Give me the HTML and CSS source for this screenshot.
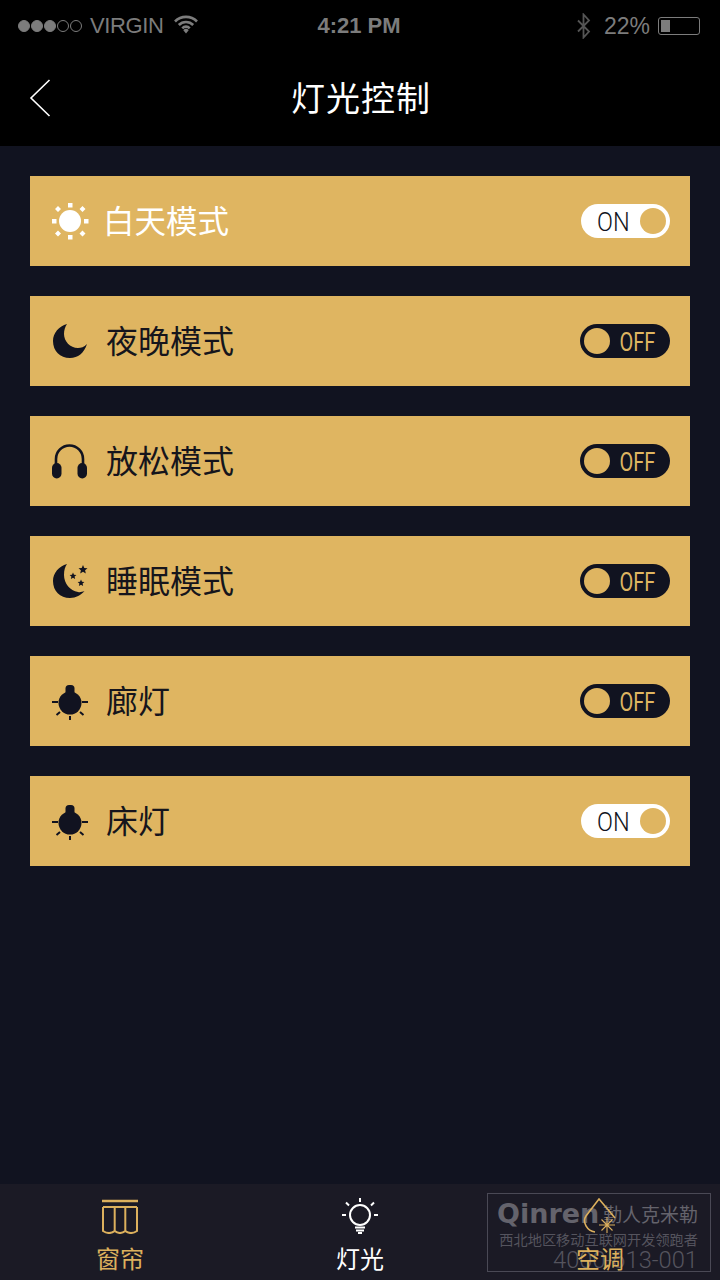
FILE: index.html
```html
<!DOCTYPE html>
<html lang="zh-CN">
<head>
  <meta charset="UTF-8">
  <title>灯光控制</title>
  <meta name="viewport" content="width=device-width, initial-scale=1.0">
  <link rel="stylesheet" href="styles.css">
</head>
<body>
  <header class="top">
    <div class="status">
      <div class="status-left">
        <span class="signal"><i class="on"></i><i class="on"></i><i class="on"></i><i></i><i></i></span>
        <span class="carrier">VIRGIN</span>
        <svg class="wifi" width="26" height="20" viewBox="0 0 26 20"><path d="M2 7.500a15.500 15.500 0 0 1 22 0M5.800 11a10 10 0 0 1 14.400 0M9.300 14.300a5 5 0 0 1 7.400 0" fill="none" stroke="#7c7c7c" stroke-width="2.600"/><path d="M13 19.500l-2.700-3.300a3.800 3.800 0 0 1 5.400 0z" fill="#7c7c7c"/></svg>
      </div>
      <div class="status-time">4:21 PM</div>
      <div class="status-right">
        <svg class="bt" width="16" height="26" viewBox="0 0 16 26"><path d="M2 7.500l11 11-5.500 6V1.500l5.500 6-11 11" fill="none" stroke="#555" stroke-width="1.800"/></svg>
        <span>22%</span>
        <span class="battery"><span class="battery-fill"></span></span>
      </div>
    </div>
    <div class="nav">
      <svg class="back" width="22" height="38" viewBox="0 0 22 38"><path d="M20.500 1L2 19l18.500 18" fill="none" stroke="#fff" stroke-width="1.600"/></svg>
      <h1>灯光控制</h1>
    </div>
  </header>

  <main class="list">
    <div class="row">
      <svg class="icon" width="38" height="38" viewBox="0 0 38 38" fill="#fff">
        <circle cx="19" cy="19" r="11"/>
        <rect x="17" y="1" width="4.500" height="4.500"/><rect x="17" y="33" width="4.500" height="4.500"/>
        <rect x="1" y="17" width="4.500" height="4.500"/><rect x="33" y="17" width="4.500" height="4.500"/>
        <path d="M7 4l3 3-3 3-3-3zM31.500 4l3 3-3 3-3-3zM7 28.500l3 3-3 3-3-3zM31.500 28.500l3 3-3 3-3-3z"/>
      </svg>
      <span class="label light">白天模式</span>
      <div class="toggle is-on"><span class="toggle-text">ON</span><span class="knob"></span></div>
    </div>
    <div class="row">
      <svg class="icon" width="38" height="38" viewBox="0 0 38 38" fill="#111320"><path d="M16 2C8 4 2 11 2 19c0 10 7 17 17 17 8 0 14-5 17-14-3 3-6 4-9 4-8 0-14-7-14-14 0-4 1-7 3-10z"/></svg>
      <span class="label">夜晚模式</span>
      <div class="toggle"><span class="knob"></span><span class="toggle-text">OFF</span></div>
    </div>
    <div class="row">
      <svg class="icon" width="38" height="38" viewBox="0 0 38 38" fill="#111320">
        <path d="M5 26v-9a13.500 13.500 0 0 1 27 0v9" fill="none" stroke="#111320" stroke-width="2.600"/>
        <rect x="1" y="21" width="9.500" height="15.500" rx="4.700"/><rect x="26.500" y="21" width="9.500" height="15.500" rx="4.700"/>
      </svg>
      <span class="label">放松模式</span>
      <div class="toggle"><span class="knob"></span><span class="toggle-text">OFF</span></div>
    </div>
    <div class="row">
      <svg class="icon" width="38" height="38" viewBox="0 0 38 38" fill="#111320">
        <path d="M16 2C8 4 2 11 2 19c0 10 7 17 17 17 6 0 11-3 14.500-7-2.500 1-4.500 1.500-6.500 1-8-1-14-9-14-17 0-5 1-8 3-11z"/>
        <path d="M32 3l1.300 2.900 3.200.3-2.400 2.100.7 3.100-2.800-1.600-2.800 1.600.7-3.100-2.400-2.100 3.200-.3z"/>
        <path d="M22 10.500l1 2.200 2.400.2-1.800 1.600.5 2.400-2.100-1.200-2.100 1.200.5-2.400-1.800-1.600 2.400-.2zM30 17.500l1 2.200 2.400.2-1.800 1.600.5 2.400-2.100-1.200-2.100 1.200.5-2.400-1.800-1.600 2.400-.2z"/>
      </svg>
      <span class="label">睡眠模式</span>
      <div class="toggle"><span class="knob"></span><span class="toggle-text">OFF</span></div>
    </div>
    <div class="row">
      <svg class="icon" width="38" height="38" viewBox="0 0 38 38" fill="#111320">
        <circle cx="19" cy="21" r="11.500"/><rect x="14.500" y="3" width="9" height="10" rx="3.500"/>
        <path d="M1 20h6M31 20h6M19 34v5M9 30l-3.500 3M29 30l3.500 3" stroke="#111320" stroke-width="2" fill="none"/>
      </svg>
      <span class="label">廊灯</span>
      <div class="toggle"><span class="knob"></span><span class="toggle-text">OFF</span></div>
    </div>
    <div class="row">
      <svg class="icon" width="38" height="38" viewBox="0 0 38 38" fill="#111320">
        <circle cx="19" cy="21" r="11.500"/><rect x="14.500" y="3" width="9" height="10" rx="3.500"/>
        <path d="M1 20h6M31 20h6M19 34v5M9 30l-3.500 3M29 30l3.500 3" stroke="#111320" stroke-width="2" fill="none"/>
      </svg>
      <span class="label">床灯</span>
      <div class="toggle is-on"><span class="toggle-text">ON</span><span class="knob"></span></div>
    </div>
  </main>

  <footer class="tabs">
    <div class="tab">
      <svg width="38" height="36" viewBox="0 0 38 36" fill="none" stroke="#dcb05d" stroke-width="2">
        <path d="M1 3h36" stroke-width="2.400"/>
        <path d="M2 9h34M2 9v24c4 2.500 8.500 2.500 11.700 0 3.300 2.500 7.300 2.500 10.600 0 3.200 2.500 7.700 2.500 11.700 0V9M13.700 9v24M24.300 9v24"/>
      </svg>
      <span>窗帘</span>
    </div>
    <div class="tab tab-active">
      <svg width="38" height="36" viewBox="0 0 38 36" fill="none" stroke="#fff" stroke-width="2">
        <circle cx="19" cy="17" r="10"/>
        <path d="M14 29.500h10M15 32.500h8M17 35h4M19 0v4M1 17h4M33 17h4M5 4.500l3 3M33 4.500l-3 3"/>
      </svg>
      <span>灯光</span>
    </div>
    <div class="tab">
      <svg width="38" height="36" viewBox="0 0 38 36" fill="none" stroke="#dcb05d" stroke-width="1.600">
        <path d="M14 34C6 33 1 24 5 18L18 1l16 19"/>
        <path d="M26 19v16M18 27h16M20.500 21.500l11 11M31.500 21.500l-11 11" stroke-width="1.100"/>
      </svg>
      <span>空调</span>
    </div>
    <div class="watermark">
      <div class="wm-brand"><b>Qinren</b><span>勤人克米勒</span></div>
      <div class="wm-line">西北地区移动互联网开发领跑者</div>
      <div class="wm-phone">4000-613-001</div>
    </div>
  </footer>
</body>
</html>
```

FILE: styles.css
```css
* {
  box-sizing: border-box;
}

html, body {
  height: 100%;
}

body {
  margin: 0;
  width: 720px;
  height: 1280px;
  display: flex;
  flex-direction: column;
  overflow: hidden;
  background: #111320;
  font-family: "Noto Sans CJK SC", "Liberation Sans", sans-serif;
}

.top {
  height: 146px;
  background: #000;
}

.status {
  height: 52px;
  padding: 0 20px 0 18px;
  display: flex;
  align-items: center;
  justify-content: space-between;
  color: #7c7c7c;
  font-family: "Liberation Sans", sans-serif;
  font-size: 23px;
}

.status-left, .status-right {
  width: 240px;
  display: flex;
  align-items: center;
  gap: 7px;
}

.status-right {
  justify-content: flex-end;
}

.status-time {
  font-weight: bold;
  font-size: 22px;
}

.carrier {
  font-size: 22px;
  letter-spacing: -0.4px;
  margin-left: 1px;
}

.signal {
  display: flex;
  gap: 1px;
}

.signal i {
  width: 12px;
  height: 12px;
  border: 1px solid #7c7c7c;
  border-radius: 50%;
}

.signal i.on {
  background: #7c7c7c;
}

.wifi {
  margin-left: 3px;
  margin-top: -4px;
}

.bt {
  margin-right: 5px;
}

.battery {
  width: 42px;
  height: 18px;
  margin-left: 1px;
  padding: 2px;
  border: 1px solid #7c7c7c;
  border-radius: 3px;
  display: flex;
}

.battery-fill {
  width: 9px;
  background: #7c7c7c;
}

.nav {
  height: 94px;
  padding-bottom: 6px;
  padding-left: 2px;
  position: relative;
  display: flex;
  align-items: center;
  justify-content: center;
}

.nav h1 {
  margin: 0;
  color: #fff;
  font-size: 34px;
  font-weight: 400;
  letter-spacing: 1px;
}

.back {
  position: absolute;
  left: 29px;
  top: 27px;
}

.list {
  flex: 1;
  padding: 30px 30px 0;
  display: flex;
  flex-direction: column;
  gap: 30px;
}

.row {
  height: 90px;
  padding: 0 20px 0 21px;
  background: #dfb561;
  display: flex;
  align-items: center;
}

.icon {
  flex: none;
}

.label {
  margin: 0 0 4px 17px;
  color: #16151c;
  font-size: 32px;
  font-weight: 400;
}

.label.light {
  margin-left: 14px;
  color: #fff;
  font-size: 31.500px;
}

.toggle {
  width: 90px;
  height: 34px;
  margin-left: auto;
  padding: 0 4px;
  border-radius: 17px;
  background: #111320;
  color: #dfb561;
  display: flex;
  align-items: center;
  justify-content: space-between;
}

.toggle.is-on {
  background: #fff;
  color: #111320;
  width: 89px;
}

.knob {
  width: 26px;
  height: 26px;
  border-radius: 50%;
  background: #dfb561;
}

.toggle-text {
  margin: 4px 6px 0 auto;
  font-family: Roboto, sans-serif;
  font-size: 25px;
  line-height: 30px;
  transform: scaleX(0.8);
}

.is-on .toggle-text {
  margin-left: 11px;
  margin-right: auto;
  font-weight: 300;
  transform: scaleX(0.94);
}

.tabs {
  height: 96px;
  position: relative;
  background: #1b1a25;
  display: flex;
}

.tab {
  width: 240px;
  padding-top: 14px;
  position: relative;
  z-index: 1;
  display: flex;
  flex-direction: column;
  align-items: center;
  color: #dcb05d;
  font-size: 24px;
  line-height: 34px;
}

.tab span {
  margin-top: 7px;
}

.tab-active {
  color: #fff;
}

.watermark {
  position: absolute;
  left: 487px;
  top: 9px;
  width: 224px;
  height: 79px;
  padding: 3px 12px 0 9px;
  border: 1px solid #4a4955;
  color: #55545e;
  text-align: right;
  font-size: 14.200px;
  line-height: 18px;
}

.wm-brand {
  height: 33px;
  display: flex;
  align-items: center;
  justify-content: space-between;
  color: #64636c;
  font-size: 19px;
  white-space: nowrap;
}

.wm-brand b {
  font-family: "DejaVu Sans", sans-serif;
  font-size: 27px;
}

.wm-line {
  white-space: nowrap;
}

.wm-phone {
  font-family: Roboto, sans-serif;
  font-weight: 300;
  font-size: 23.700px;
  line-height: 25px;
}
```
